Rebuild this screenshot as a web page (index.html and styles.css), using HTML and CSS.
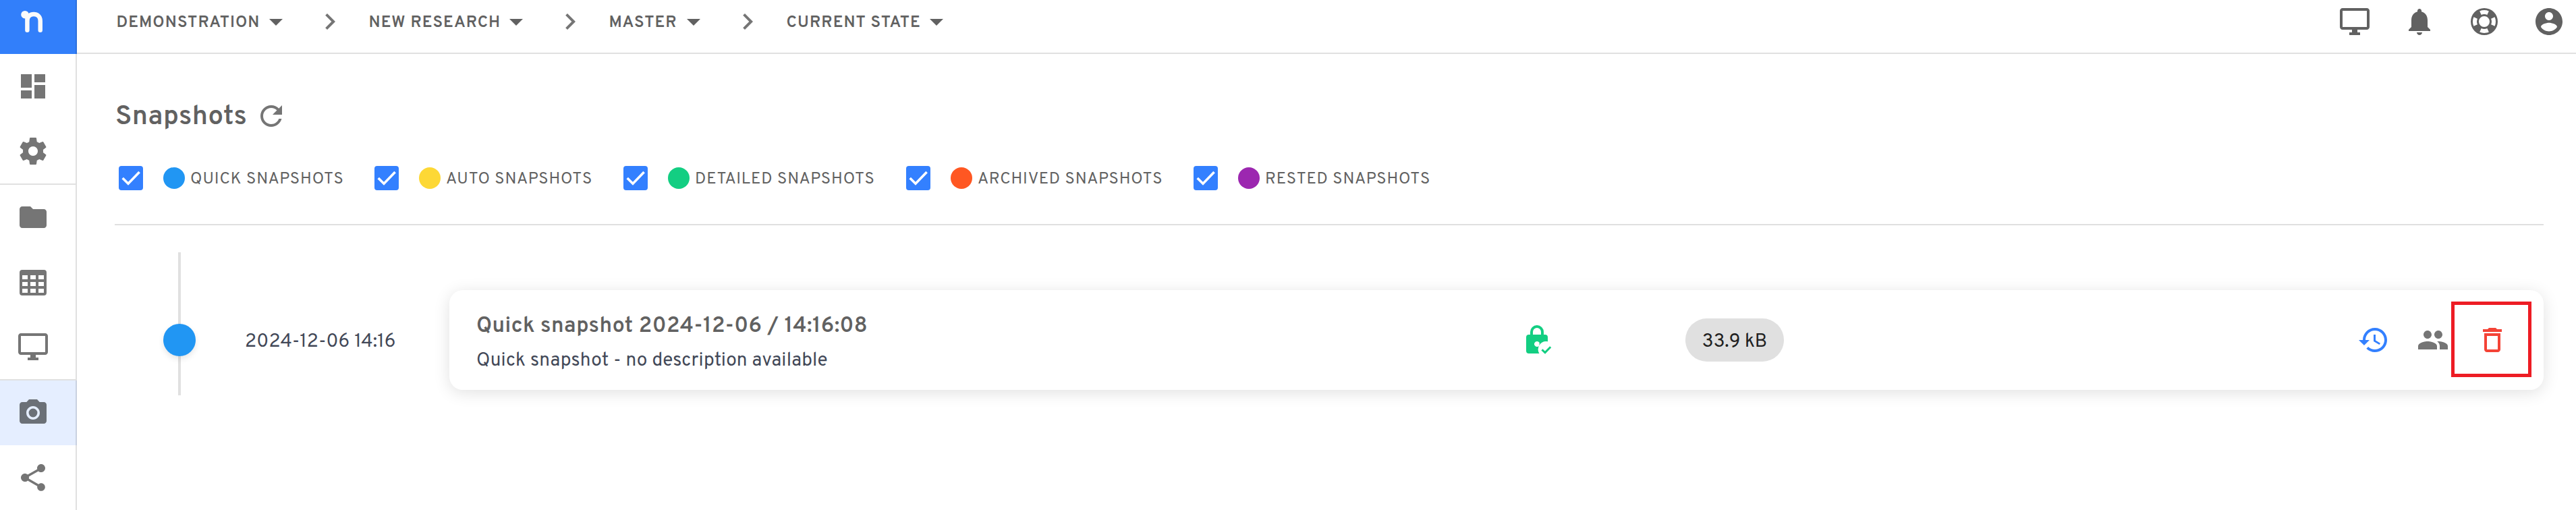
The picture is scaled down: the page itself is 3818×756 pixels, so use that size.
FILE: index.html
```html
<!DOCTYPE html>
<html lang="en">
<head>
<meta charset="utf-8">
<title>Snapshots</title>
<link rel="stylesheet" href="styles.css">
</head>
<body>
<svg class="defs" width="0" height="0" aria-hidden="true">
  <symbol id="monitor" viewBox="0 0 24 24"><path d="M21 2H3c-1.1 0-2 .9-2 2v12c0 1.1.9 2 2 2h7v2H8v2h8v-2h-2v-2h7c1.1 0 2-.9 2-2V4c0-1.1-.9-2-2-2zm0 14H3V4h18v12z"/></symbol>
  <symbol id="caret" viewBox="0 0 24 24"><path d="M7 10l5 5 5-5z"/></symbol>
  <symbol id="chevron" viewBox="0 0 24 24"><path d="M10 6L8.59 7.41 13.17 12l-4.58 4.59L10 18l6-6z"/></symbol>
</svg>
<div class="app">
  <nav class="sidebar">
    <div class="logo"><svg viewBox="0 0 40 40"><circle cx="7" cy="8.700" r="5.800"/><path d="M10.400 31.800V10M10.400 18C10.400 11 15 8.100 20 8.100S29.700 11 29.700 18V31.800"/></svg></div>
    <a class="nav-item"><svg class="icon" viewBox="0 0 24 24"><path d="M3 13h8V3H3v10zm0 8h8v-6H3v6zm10 0h8V11h-8v10zm0-18v6h8V3h-8z"/></svg></a>
    <a class="nav-item"><svg class="icon" viewBox="0 0 24 24"><path d="M19.430 12.980c.04-.32.07-.64.07-.98s-.03-.66-.07-.98l2.110-1.650c.19-.15.24-.42.12-.64l-2-3.460c-.12-.22-.39-.3-.61-.22l-2.490 1c-.52-.4-1.080-.73-1.690-.98l-.38-2.650C14.460 2.180 14.250 2 14 2h-4c-.25 0-.46.18-.49.42l-.38 2.650c-.61.25-1.170.59-1.690.98l-2.490-1c-.23-.09-.49 0-.61.22l-2 3.460c-.13.22-.07.49.12.64l2.110 1.650c-.04.32-.07.65-.07.98s.03.66.07.98l-2.110 1.650c-.19.15-.24.42-.12.64l2 3.460c.12.22.39.3.61.22l2.490-1c.52.4 1.080.73 1.690.98l.38 2.650c.03.24.24.42.49.42h4c.25 0 .46-.18.49-.42l.38-2.650c.61-.25 1.170-.59 1.690-.98l2.490 1c.23.09.49 0 .61-.22l2-3.460c.12-.22.07-.49-.12-.64l-2.110-1.650zM12 15.500c-1.930 0-3.500-1.570-3.500-3.500s1.570-3.500 3.500-3.500 3.500 1.570 3.500 3.500-1.570 3.500-3.500 3.500z"/></svg></a>
    <hr class="nav-rule">
    <a class="nav-item"><svg class="icon" viewBox="0 0 24 24"><path d="M10 4H4c-1.100 0-1.990.9-1.990 2L2 18c0 1.100.9 2 2 2h16c1.100 0 2-.9 2-2V8c0-1.100-.9-2-2-2h-8l-2-2z"/></svg></a>
    <a class="nav-item"><svg class="icon" viewBox="0 0 24 24"><path fill-rule="evenodd" d="M4 3h16a2 2 0 0 1 2 2v15a2 2 0 0 1-2 2H4a2 2 0 0 1-2-2V5a2 2 0 0 1 2-2zM4 7v3h4V7zM10 7v3h4V7zM16 7v3h4V7zM4 12v3h4v-3zM10 12v3h4v-3zM16 12v3h4v-3zM4 17v3h4v-3zM10 17v3h4v-3zM16 17v3h4v-3z"/></svg></a>
    <a class="nav-item"><svg class="icon"><use href="#monitor"/></svg></a>
    <hr class="nav-rule">
    <a class="nav-item active"><svg class="icon" viewBox="0 0 24 24"><circle cx="12" cy="12" r="3.200"/><path d="M9 2L7.170 4H4c-1.100 0-2 .9-2 2v12c0 1.100.9 2 2 2h16c1.100 0 2-.9 2-2V6c0-1.100-.9-2-2-2h-3.170L15 2H9zm3 15c-2.760 0-5-2.240-5-5s2.240-5 5-5 5 2.240 5 5-2.240 5-5 5z"/></svg></a>
    <a class="nav-item"><svg class="icon" viewBox="0 0 24 24"><path d="M18 16.080c-.76 0-1.440.3-1.960.77L8.910 12.700c.05-.23.09-.46.09-.7s-.04-.47-.09-.7l7.050-4.110c.54.5 1.250.81 2.040.81 1.660 0 3-1.340 3-3s-1.340-3-3-3-3 1.340-3 3c0 .24.04.47.09.7L8.040 9.810C7.500 9.310 6.790 9 6 9c-1.660 0-3 1.340-3 3s1.340 3 3 3c.79 0 1.500-.31 2.040-.81l7.120 4.160c-.05.21-.08.43-.08.65 0 1.610 1.310 2.920 2.920 2.920 1.610 0 2.920-1.310 2.920-2.920s-1.310-2.920-2.920-2.920z"/></svg></a>
  </nav>

  <div class="content">
    <header class="topbar">
      <div class="crumbs">
        <div class="crumb demo"><span>DEMONSTRATION</span><svg class="icon"><use href="#caret"/></svg></div>
        <svg class="icon sep"><use href="#chevron"/></svg>
        <div class="crumb research"><span>NEW RESEARCH</span><svg class="icon"><use href="#caret"/></svg></div>
        <svg class="icon sep"><use href="#chevron"/></svg>
        <div class="crumb master"><span>MASTER</span><svg class="icon"><use href="#caret"/></svg></div>
        <svg class="icon sep"><use href="#chevron"/></svg>
        <div class="crumb state"><span>CURRENT STATE</span><svg class="icon"><use href="#caret"/></svg></div>
      </div>
      <div class="tools">
        <svg class="icon"><use href="#monitor"/></svg>
        <svg class="icon" viewBox="0 0 24 24"><path d="M12 22c1.100 0 2-.9 2-2h-4c0 1.100.89 2 2 2zm6-6v-5c0-3.070-1.640-5.640-4.500-6.320V4c0-.83-.67-1.500-1.500-1.500s-1.500.67-1.500 1.500v.68C7.630 5.360 6 7.920 6 11v5l-2 2v1h16v-1l-2-2z"/></svg>
        <svg class="icon" viewBox="0 0 24 24"><path d="M19.790,15.410C20.740,13.240 20.740,10.740 19.790,8.590L17.050,9.830C17.650,11.210 17.650,12.780 17.060,14.170L19.790,15.410M15.420,4.210C13.250,3.260 10.760,3.260 8.590,4.210L9.830,6.940C11.220,6.350 12.790,6.350 14.180,6.950L15.420,4.210M4.210,8.580C3.260,10.760 3.260,13.240 4.210,15.420L6.950,14.170C6.350,12.790 6.350,11.210 6.950,9.820L4.210,8.580M8.590,19.790C10.760,20.740 13.250,20.740 15.420,19.780L14.180,17.050C12.800,17.650 11.220,17.650 9.840,17.060L8.590,19.790M12,2A10,10 0 0,1 22,12A10,10 0 0,1 12,22A10,10 0 0,1 2,12A10,10 0 0,1 12,2M12,8A4,4 0 0,0 8,12A4,4 0 0,0 12,16A4,4 0 0,0 16,12A4,4 0 0,0 12,8Z" fill-rule="evenodd"/></svg>
        <svg class="icon" viewBox="0 0 24 24"><path d="M12 2C6.480 2 2 6.480 2 12s4.480 10 10 10 10-4.480 10-10S17.520 2 12 2zm0 3c1.660 0 3 1.340 3 3s-1.340 3-3 3-3-1.340-3-3 1.340-3 3-3zm0 14.200c-2.500 0-4.710-1.280-6-3.220.03-1.990 4-3.080 6-3.080 1.990 0 5.970 1.090 6 3.080-1.290 1.940-3.500 3.220-6 3.220z"/></svg>
      </div>
    </header>

    <main class="page">
      <div class="heading">
        <h1>Snapshots</h1>
        <svg class="icon" viewBox="0 0 24 24"><path d="M17.650 6.350C16.200 4.900 14.210 4 12 4c-4.420 0-7.990 3.580-7.990 8s3.570 8 7.990 8c3.730 0 6.840-2.550 7.730-6h-2.080c-.82 2.330-3.040 4-5.650 4-3.310 0-6-2.690-6-6s2.690-6 6-6c1.660 0 3.140.69 4.220 1.780L13 11h7V4l-2.350 2.350z"/></svg>
      </div>
      <div class="filters">
        <label class="filter quick"><span class="box"><svg viewBox="0 0 36 36"><path d="M5.700 18L14 26.200L30.600 9"/></svg></span><i class="dot"></i><span class="name">QUICK SNAPSHOTS</span></label>
        <label class="filter auto"><span class="box"><svg viewBox="0 0 36 36"><path d="M5.700 18L14 26.200L30.600 9"/></svg></span><i class="dot"></i><span class="name">AUTO SNAPSHOTS</span></label>
        <label class="filter detailed"><span class="box"><svg viewBox="0 0 36 36"><path d="M5.700 18L14 26.200L30.600 9"/></svg></span><i class="dot"></i><span class="name">DETAILED SNAPSHOTS</span></label>
        <label class="filter archived"><span class="box"><svg viewBox="0 0 36 36"><path d="M5.700 18L14 26.200L30.600 9"/></svg></span><i class="dot"></i><span class="name">ARCHIVED SNAPSHOTS</span></label>
        <label class="filter rested"><span class="box"><svg viewBox="0 0 36 36"><path d="M5.700 18L14 26.200L30.600 9"/></svg></span><i class="dot"></i><span class="name">RESTED SNAPSHOTS</span></label>
      </div>
      <section class="timeline">
        <div class="rail"><span class="node"></span></div>
        <time class="date">2024-12-06 14:16</time>
        <article class="card">
          <div class="info">
            <h2>Quick snapshot 2024-12-06 / 14:16:08</h2>
            <p>Quick snapshot - no description available</p>
          </div>
          <svg class="icon lock" viewBox="0 0 24 24">
            <path d="M8 9V6a4 4 0 0 1 8 0v3" fill="none" stroke="#13ce82" stroke-width="2"/>
            <path fill-rule="evenodd" d="M6 8h12a2 2 0 0 1 2 2v3.100a6 6 0 0 0-6.300 8.900H6a2 2 0 0 1-2-2V10a2 2 0 0 1 2-2zM12 13a2 2 0 1 0 1.600 3.200L13.900 14.400A2 2 0 0 0 12 13z"/>
            <path d="M15.700 19.200L18 21.300L22.100 17.100" fill="none" stroke="#13ce82" stroke-width="1.500"/>
          </svg>
          <span class="size">33.9 kB</span>
          <div class="actions">
            <svg class="icon restore" viewBox="0 0 24 24"><path d="M13 3c-4.970 0-9 4.030-9 9H1l3.890 3.890.07.14L9 12H6c0-3.870 3.130-7 7-7s7 3.130 7 7-3.130 7-7 7c-1.930 0-3.680-.79-4.940-2.060l-1.420 1.420C8.270 19.990 10.510 21 13 21c4.970 0 9-4.030 9-9s-4.030-9-9-9zm-1 5v5l4.280 2.540.72-1.210-3.500-2.080V8H12z"/></svg>
            <svg class="icon people" viewBox="0 0 24 24"><path d="M16 11c1.660 0 2.990-1.340 2.990-3S17.660 5 16 5c-1.660 0-3 1.340-3 3s1.340 3 3 3zm-8 0c1.660 0 2.990-1.340 2.990-3S9.660 5 8 5C6.340 5 5 6.340 5 8s1.340 3 3 3zm0 2c-2.330 0-7 1.170-7 3.500V19h14v-2.500c0-2.330-4.670-3.500-7-3.500zm8 0c-.29 0-.62.02-.97.05 1.160.84 1.970 1.970 1.970 3.450V19h6v-2.500c0-2.330-4.670-3.500-7-3.500z"/></svg>
            <div class="highlight"><svg class="icon trash" viewBox="0 0 24 24"><path d="M6 19c0 1.100.9 2 2 2h8c1.100 0 2-.9 2-2V7H6v12zM8 9h8v10H8V9zm7.500-5l-1-1h-5l-1 1H5v2h14V4z"/></svg></div>
          </div>
        </article>
      </section>
    </main>
  </div>
</div>
</body>
</html>
```

FILE: styles.css
```css
* { box-sizing: border-box; }

body {
  margin: 0;
  background: #fff;
  color: #616161;
  font-family: Overpass, Roboto, "Liberation Sans", sans-serif;
  overflow: hidden;
}

.defs { position: absolute; }

.icon { display: block; flex: none; width: 48px; height: 48px; fill: currentColor; }

.app { display: flex; width: 3818px; height: 756px; }

/* Sidebar */
.sidebar {
  display: flex;
  flex-direction: column;
  flex: none;
  width: 114px;
  height: 756px;
  color: #757575;
  background: linear-gradient(#e0e0e0, #e0e0e0) right / 2px 100% no-repeat;
}
.logo { height: 80px; padding: 13px 0 0 30px; background: #327ffa; border-right: 2px solid #2d70dc; }
.logo svg { display: block; width: 40px; height: 40px; fill: #fafafa; }
.logo path { fill: none; stroke: #fafafa; stroke-width: 6.500; stroke-linecap: round; }
.nav-item { display: flex; align-items: center; height: 96px; padding-left: 25px; }
.nav-item.active { background: #e5eeff; border-right: 2px solid #c9d1e0; color: #6b7077; }
.nav-rule { width: 114px; height: 2px; margin: 0; border: 0; background: #e0e0e0; }

.content { flex: 1; min-width: 0; }

/* Top bar */
.topbar {
  display: flex;
  justify-content: space-between;
  height: 80px;
  padding: 8px 16px 0 57px;
  border-bottom: 2px solid #e0e0e0;
}
.crumbs { display: flex; gap: 32px; height: 48px; }
.sep { color: #757575; }
.crumb { display: flex; align-items: center; font-size: 24px; font-weight: 600; white-space: nowrap; }
.crumb span { flex: none; padding: 4px 0 0 1.500px; line-height: 30px; letter-spacing: 1.050px; }
.demo span { width: 214px; }
.research span { width: 196px; }
.master span { width: 103px; }
.state span { width: 200px; }
.tools { display: flex; gap: 48px; }

/* Page */
.page { padding: 68px 48px 0 56px; }
.heading { display: flex; align-items: center; height: 48px; }
.heading h1 { width: 208px; margin: 0; padding: 4px 0 0 1px; font-size: 40px; font-weight: 600; line-height: 48px; letter-spacing: .35px; white-space: nowrap; }
.heading .icon { color: #757575; }

.filters { display: flex; height: 138px; padding: 50px 0 0 6px; border-bottom: 2px solid #e0e0e0; }
.filter { display: flex; align-items: center; flex: none; height: 36px; font-size: 24px; letter-spacing: .88px; white-space: nowrap; }
.name { padding-top: 4px; line-height: 30px; }
.box { flex: none; width: 36px; height: 36px; margin-right: 30px; border-radius: 4px; background: #3380ff; }
.box svg { display: block; fill: none; stroke: #fff; stroke-width: 3.600; }
.dot { flex: none; width: 32px; height: 32px; margin-right: 8px; border-radius: 50%; }
.quick { width: 379px; }
.auto { width: 369px; }
.detailed { width: 419px; }
.archived { width: 426px; }
.quick .dot { background: #2196f3; }
.auto .dot { background: #fdd835; }
.detailed .dot { background: #13ce82; }
.archived .dot { background: #ff5722; }
.rested .dot { background: #9c27b0; }

/* Timeline */
.timeline { display: flex; align-items: center; height: 212px; margin-top: 40px; padding-left: 72px; }
.rail {
  display: flex;
  align-items: center;
  flex: none;
  width: 48px;
  height: 212px;
  background: linear-gradient(#e0e0e0, #e0e0e0) center / 4px 100% no-repeat;
}
.node { width: 48px; height: 48px; margin-top: 48px; border-radius: 50%; background: #2196f3; box-shadow: 0 4px 8px rgba(0, 0, 0, .1); }
.date { width: 376px; padding: 54px 0 0 73px; color: #424857; font-size: 28px; line-height: 48px; letter-spacing: .15px; white-space: nowrap; }
.card {
  display: flex;
  align-items: center;
  flex: 1;
  height: 148px;
  margin-top: 48px;
  padding-left: 40px;
  border-radius: 20px;
  background: #fff;
  box-shadow: 0 4px 24px rgba(0, 0, 0, .12);
}
.info { width: 1548px; padding-top: 10px; white-space: nowrap; }
.info h2 { margin: 0; font-size: 32px; font-weight: 600; line-height: 52px; letter-spacing: .37px; }
.info p { margin: 0; color: #424857; font-size: 28px; line-height: 50px; letter-spacing: .2px; }
.lock { color: #13ce82; }
.size { width: 146px; height: 64px; margin-left: 196px; border-radius: 32px; background: #e0e0e0; color: #212121; font-size: 28px; line-height: 70px; text-align: center; }
.actions { display: flex; align-items: center; margin: 0 18px 0 auto; }
.restore { margin-right: 40px; color: #3380ff; }
.people { margin-right: 3px; color: #757575; }
.highlight { display: flex; align-items: center; width: 119px; height: 112px; margin-top: -2px; padding: 2px 0 0 32px; border: 5px solid #ed1c24; }
.trash { color: #f44336; }
```
